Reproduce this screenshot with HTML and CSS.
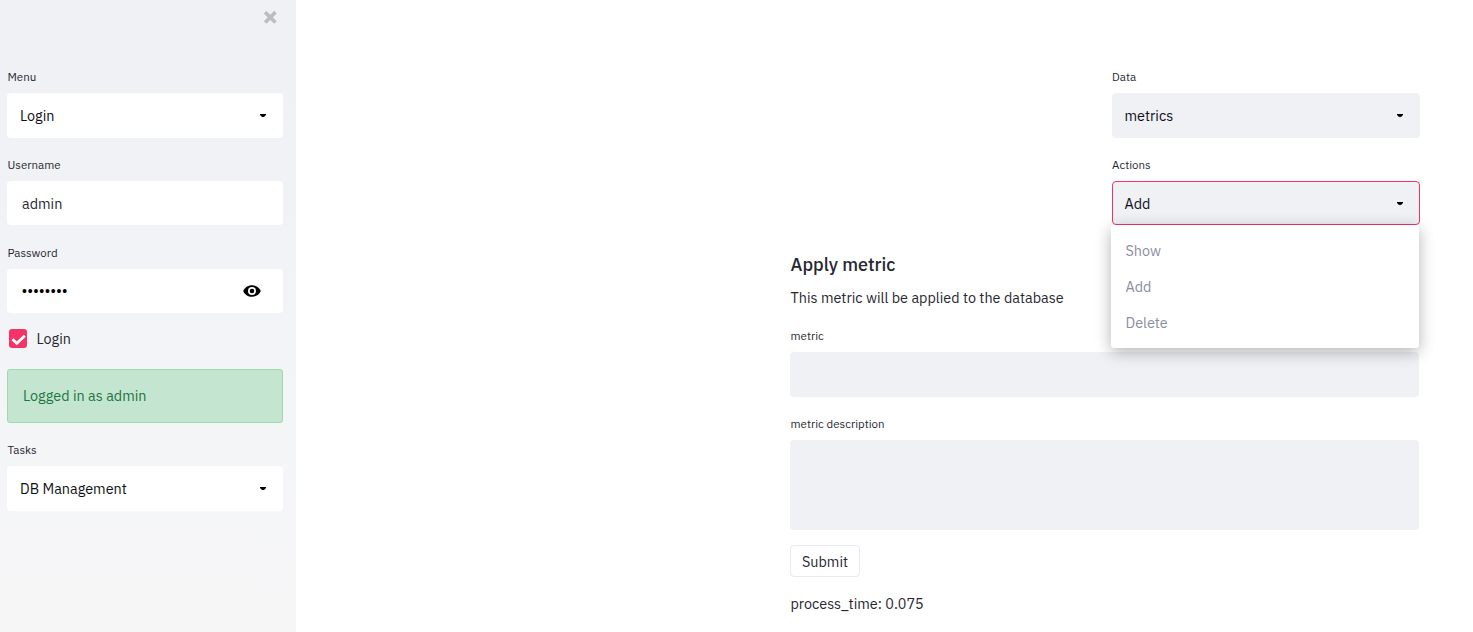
FILE: index.html
```html
<!DOCTYPE html>
<html lang="en">
<head>
<meta charset="utf-8">
<title>DB Management</title>
<link rel="stylesheet" href="styles.css">
</head>
<body>
<div class="app">
  <aside class="sidebar">
    <button class="close" aria-label="Close sidebar">
      <svg width="14" height="14" viewBox="0 0 14 14"><path d="M3.400 3.400L11.200 11.200M11.200 3.400L3.400 11.200" stroke="#bcbdc2" stroke-width="3.600" stroke-linecap="square"/></svg>
    </button>
    <div class="field">
      <div class="label">Menu</div>
      <div class="select"><span>Login</span><svg class="caret" width="8" height="5" viewBox="0 0 8 5"><path d="M1 1h6v1L5 4H3L1 2z"/></svg></div>
    </div>
    <div class="field">
      <div class="label">Username</div>
      <div class="input"><span>admin</span></div>
    </div>
    <div class="field field-password">
      <div class="label">Password</div>
      <div class="input"><span class="dots">••••••••</span>
        <svg class="eye" width="18" height="12" viewBox="0 0 18 12"><path fill-rule="evenodd" d="M9 .2C5 .2 1.600 2.500.2 6 1.600 9.500 5 11.800 9 11.800S16.400 9.500 17.800 6C16.400 2.500 13 .2 9 .2zM9 2a4 4 0 1 1 0 8 4 4 0 0 1 0-8zM9 3.700a2.300 2.300 0 1 0 0 4.600 2.300 2.300 0 0 0 0-4.600z"/></svg>
      </div>
    </div>
    <div class="check">
      <span class="box"><svg width="18" height="19" viewBox="0 0 18 19"><path d="M3.500 10.200L7.800 14.300L15.800 6.800" fill="none" stroke="#fff" stroke-width="2.700"/></svg></span>
      <span>Login</span>
    </div>
    <div class="alert">Logged in as admin</div>
    <div class="field">
      <div class="label">Tasks</div>
      <div class="select"><span>DB Management</span><svg class="caret" width="8" height="5" viewBox="0 0 8 5"><path d="M1 1h6v1L5 4H3L1 2z"/></svg></div>
    </div>
  </aside>
  <main class="main">
    <section class="filters">
      <div class="field">
        <div class="label">Data</div>
        <div class="select"><span>metrics</span><svg class="caret" width="8" height="5" viewBox="0 0 8 5"><path d="M1 1h6v1L5 4H3L1 2z"/></svg></div>
      </div>
      <div class="field field-actions">
        <div class="label">Actions</div>
        <div class="select select-open"><span>Add</span><svg class="caret" width="8" height="5" viewBox="0 0 8 5"><path d="M1 1h6v1L5 4H3L1 2z"/></svg></div>
        <ul class="menu">
          <li>Show</li>
          <li>Add</li>
          <li>Delete</li>
        </ul>
      </div>
    </section>
    <form class="form">
      <h3 class="title">Apply metric</h3>
      <p class="text">This metric will be applied to the database</p>
      <div class="label">metric</div>
      <div class="blank"></div>
      <div class="label">metric description</div>
      <div class="blank blank-area"></div>
      <button class="submit" type="button">Submit</button>
      <p class="text">process_time: 0.075</p>
    </form>
  </main>
</div>
</body>
</html>
```

FILE: styles.css
```css
* { box-sizing: border-box; }
body {
  margin: 0;
  background: #fff;
  color: #262730;
  font-family: "IBM Plex Sans", Roboto, sans-serif;
  font-size: 14.4px;
  line-height: 20px;
}
svg { display: block; flex: none; }
.app { display: flex; height: 632px; overflow: hidden; }
.sidebar {
  width: 296px;
  flex: none;
  padding: 10px 13px 0 7px;
  background: linear-gradient(180deg, #f0f1f5 0%, #f1f2f6 30%, #f4f5f7 65%, #f6f6f7 100%);
}
.close {
  display: block;
  margin: 0 6px 45px auto;
  padding: 0;
  border: 0;
  background: none;
}
.label {
  height: 16px;
  margin: 0 0 8px 0.5px;
  font-size: 11.52px;
  line-height: 16px;
  white-space: nowrap;
}
.field { margin-bottom: 19px; }
.select, .input {
  display: flex;
  align-items: center;
  justify-content: space-between;
  height: 45px;
  padding: 1px 16px 0 13px;
  border-radius: 4px;
  background: #fff;
  color: #0e0f14;
}
.input { height: 44px; padding: 1px 22px 0 15px; color: #262730; }
.field:has(.input) { margin-bottom: 20px; }
.sidebar .field-password { margin-bottom: 16px; }
.dots { padding-bottom: 1px; color: #000; font-family: "Liberation Sans", sans-serif; font-size: 14px; letter-spacing: 0.85px; }
.caret { margin-bottom: 1px; }
.eye { margin-bottom: 2px; }
.check { display: flex; align-items: center; gap: 9.5px; height: 20px; margin: 0 0 20px 2px; }
.box { width: 18px; height: 19px; margin-bottom: 1px; border-radius: 3px; background: #f63366; }
.alert {
  height: 54px;
  margin-bottom: 19px;
  padding: 16px 15px;
  border: 1px solid #9bd9ae;
  border-radius: 3px;
  background: #c4e6d0;
  color: #1d7440;
}
.main { flex: 1; padding: 69px 53px 0 494px; }
.filters { width: 308px; margin: 0 0 0 auto; }
.filters .select { background: #f0f1f5; padding-left: 12.5px; }
.filters .label { margin-left: 0; }
.field-actions { position: relative; margin-bottom: 0; }
.filters .select-open { height: 44px; border: 1px solid #f63366; padding: 1px 15px 0 11.5px; }
.menu {
  position: absolute;
  z-index: 1;
  top: 68px;
  left: -1px;
  width: 308px;
  height: 123px;
  margin: 0;
  padding: 7px 0 0 14.5px;
  border-radius: 3px;
  background: #fff;
  box-shadow: 0 4px 16px rgba(0, 0, 0, 0.3);
  color: #8c8d9f;
  list-style: none;
}
.menu li { height: 36px; line-height: 37px; }
.form { width: 629px; padding-top: 28px; }
.title { margin: 0 0 11px 0.5px; font-size: 18px; font-weight: 500; line-height: 24px; }
.text { margin: 0 0 20px 0.5px; line-height: 20px; }
.blank { height: 45px; margin-bottom: 19px; border-radius: 4px; background: #f0f1f5; }
.blank-area { height: 90px; margin-bottom: 15px; }
.submit {
  display: block;
  width: 70px;
  height: 32px;
  margin-bottom: 17px;
  padding: 1px 0 0;
  border: 1px solid #e6eaf1;
  border-radius: 4px;
  background: #fff;
  color: #262730;
  font: inherit;
}
```
